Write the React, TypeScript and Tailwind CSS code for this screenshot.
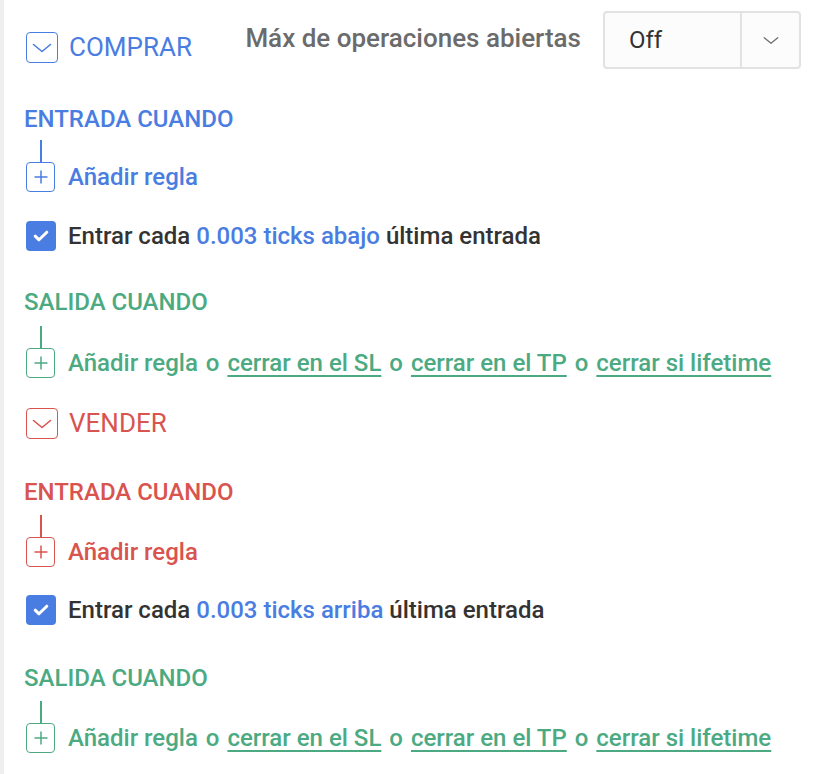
import { ReactNode } from 'react';

const BLUE = 'text-[#4a7de2]';

function Chevron({ className }: { className?: string }) {
  return (
    <svg width="20" height="10" viewBox="0 0 20 10" fill="none" className={className}>
      <path d="M1.5 1.5 L10 8.5 L18.5 1.5" stroke="currentColor" strokeWidth="1.6" strokeLinecap="round" strokeLinejoin="round" />
    </svg>
  );
}

function SideHeader({ color, label }: { color: string; label: string }) {
  return (
    <div className={`flex items-center gap-[11px] ${color}`}>
      <div className="flex h-[31px] w-[32px] items-center justify-center rounded-[4px] border-[1.5px] border-current">
        <Chevron />
      </div>
      <span className="text-[26px] leading-[31px]">{label}</span>
    </div>
  );
}

function SectionTitle({ color, children, className }: { color: string; children: ReactNode; className?: string }) {
  return <div className={`-ml-[2px] text-[24px] font-medium leading-[26px] ${color} ${className ?? ''}`}>{children}</div>;
}

function AddRule({ color, children, className }: { color: string; children: ReactNode; className?: string }) {
  return (
    <div className={`flex flex-col ${color} ${className ?? ''}`}>
      <div className="ml-[14px] h-[22px] w-[1.5px] bg-current" />
      <div className="flex items-center gap-[13px]">
        <div className="flex h-[30px] w-[29px] items-center justify-center rounded-[4px] border-[1.5px] border-current">
          <svg width="16" height="16" viewBox="0 0 16 16" fill="none">
            <path d="M8 1.5v13M1.5 8h13" stroke="currentColor" strokeWidth="1.5" />
          </svg>
        </div>
        <span className="text-[24px] font-medium leading-[30px]">{children}</span>
      </div>
    </div>
  );
}

function ExitLinks() {
  const link = 'underline decoration-2 underline-offset-[4px]';
  return (
    <>
      Añadir regla <span className="mx-[2px]">o</span> <span className={link}>cerrar en el SL</span>{' '}
      <span className="mx-[2px]">o</span> <span className={link}>cerrar en el TP</span>{' '}
      <span className="mx-[2px]">o</span> <span className={link}>cerrar si lifetime</span>
    </>
  );
}

function EntryEvery({ word, className }: { word: string; className?: string }) {
  return (
    <div className={`flex items-center gap-[12px] ${className ?? ''}`}>
      <div className="flex h-[30px] w-[30px] items-center justify-center rounded-[4px] bg-[#4a7de2]">
        <svg width="16" height="12" viewBox="0 0 16 12" fill="none">
          <path d="M2.2 6.2 L6 9.8 L13.8 2.2" stroke="white" strokeWidth="3" strokeLinecap="round" strokeLinejoin="round" />
        </svg>
      </div>
      <span className="text-[24px] font-medium leading-[30px] text-[#333]">
        Entrar cada <span className={BLUE}>0.003 ticks {word}</span> última entrada
      </span>
    </div>
  );
}

export default function App() {
  const green = 'text-[#4caa82]';
  const red = 'text-[#d9534f]';
  return (
    <div className="flex min-h-[774px] w-[822px] bg-white font-['Roboto',sans-serif]">
      <div className="w-[4px] shrink-0 bg-[#efefef]" />
      <div className="flex flex-1 flex-col pl-[22px] pr-[21px] pt-[11px]">
        {/* header */}
        <div className="flex items-start justify-between">
          <div className="mt-[21px]">
            <SideHeader color={BLUE} label="COMPRAR" />
          </div>
          <div className="flex items-center gap-[22px]">
            <span className="mb-[4px] text-[26px] font-medium text-[#6b6b6b]">Máx de operaciones abiertas</span>
            <div className="flex h-[58px] w-[198px] rounded-[4px] border-2 border-[#e2e2e2] bg-[#fcfcfc]">
              <div className="flex flex-1 items-center pl-[24px] text-[24px] text-[#333]">Off</div>
              <div className="flex w-[59px] items-center justify-center border-l-2 border-[#e2e2e2] text-[#6f6f6f]">
                <Chevron className="h-[9px] w-[16px]" />
              </div>
            </div>
          </div>
        </div>

        <SectionTitle color={BLUE} className="mt-[37px]">ENTRADA CUANDO</SectionTitle>
        <AddRule color={BLUE} className="mt-[8px]">Añadir regla</AddRule>
        <EntryEvery word="abajo" className="mt-[29px]" />
        <SectionTitle color={green} className="mt-[38px]">SALIDA CUANDO</SectionTitle>
        <AddRule color={green} className="mt-[11px]">
          <ExitLinks />
        </AddRule>

        <div className="mt-[30px]">
          <SideHeader color={red} label="VENDER" />
        </div>
        <SectionTitle color={red} className="mt-[40px]">ENTRADA CUANDO</SectionTitle>
        <AddRule color={red} className="mt-[10px]">Añadir regla</AddRule>
        <EntryEvery word="arriba" className="mt-[28px]" />
        <SectionTitle color={green} className="mt-[40px]">SALIDA CUANDO</SectionTitle>
        <AddRule color={green} className="mt-[10px]">
          <ExitLinks />
        </AddRule>
      </div>
    </div>
  );
}
